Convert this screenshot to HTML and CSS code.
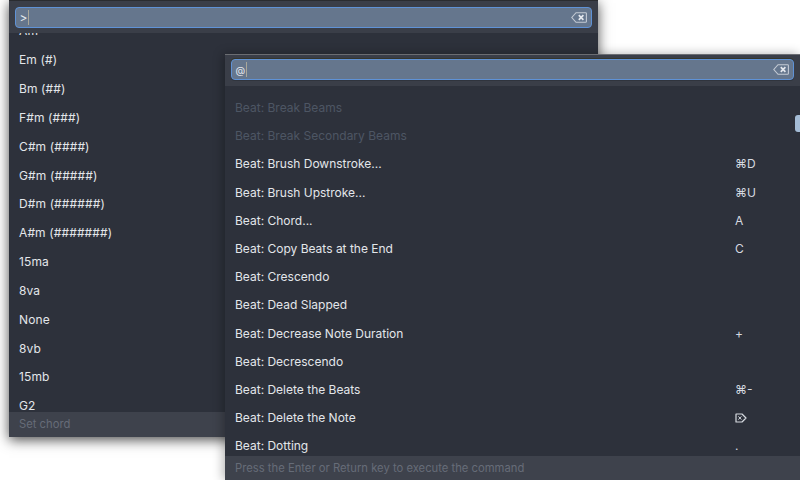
FILE: index.html
```html
<!DOCTYPE html>
<html lang="en">
<head>
<meta charset="utf-8">
<title>Command palettes</title>
<link rel="stylesheet" href="styles.css">
</head>
<body>
<section class="win win-left">
  <header class="head">
    <div class="field"><span class="val">&gt;</span><span class="caret"></span><span class="spring"></span>
      <svg class="clear" viewBox="0 0 16 11"><path d="M5 .7h9.6a.8.8 0 0 1 .8.8v8a.8.8 0 0 1-.8.8H5L.8 5.5z" fill="none" stroke="#c3cad4" stroke-width="1.1"/><path d="M7.8 3.2l4.6 4.6M12.4 3.2L7.8 7.8" stroke="#e4e8ee" stroke-width="1.7"/></svg>
    </div>
  </header>
  <div class="list">
    <div class="row">Am</div>
    <div class="row">Em (#)</div>
    <div class="row">Bm (##)</div>
    <div class="row">F#m (###)</div>
    <div class="row">C#m (####)</div>
    <div class="row">G#m (#####)</div>
    <div class="row">D#m (######)</div>
    <div class="row">A#m (#######)</div>
    <div class="row">15ma</div>
    <div class="row">8va</div>
    <div class="row">None</div>
    <div class="row">8vb</div>
    <div class="row">15mb</div>
    <div class="row">G2</div>
  </div>
  <footer class="foot">Set chord</footer>
</section>
<section class="win win-right">
  <header class="head">
    <div class="field"><span class="val val-at">@</span><span class="caret"></span><span class="spring"></span>
      <svg class="clear" viewBox="0 0 16 11"><path d="M5 .7h9.6a.8.8 0 0 1 .8.8v8a.8.8 0 0 1-.8.8H5L.8 5.5z" fill="none" stroke="#c3cad4" stroke-width="1.1"/><path d="M7.8 3.2l4.6 4.6M12.4 3.2L7.8 7.8" stroke="#e4e8ee" stroke-width="1.7"/></svg>
    </div>
  </header>
  <div class="list cmds">
    <div class="cmd off"><span class="name">Beat: Break Beams</span></div>
    <div class="cmd off"><span class="name">Beat: Break Secondary Beams</span></div>
    <div class="cmd"><span class="name">Beat: Brush Downstroke...</span><span class="key">⌘D</span></div>
    <div class="cmd"><span class="name">Beat: Brush Upstroke...</span><span class="key">⌘U</span></div>
    <div class="cmd"><span class="name">Beat: Chord...</span><span class="key">A</span></div>
    <div class="cmd"><span class="name">Beat: Copy Beats at the End</span><span class="key">C</span></div>
    <div class="cmd"><span class="name">Beat: Crescendo</span></div>
    <div class="cmd"><span class="name">Beat: Dead Slapped</span></div>
    <div class="cmd"><span class="name">Beat: Decrease Note Duration</span><span class="key">+</span></div>
    <div class="cmd"><span class="name">Beat: Decrescendo</span></div>
    <div class="cmd"><span class="name">Beat: Delete the Beats</span><span class="key">⌘-</span></div>
    <div class="cmd"><span class="name">Beat: Delete the Note</span><span class="key"><svg class="del" viewBox="0 0 12 10"><path d="M1 1h6l4 4-4 4H1z" fill="none" stroke="#d6dae0" stroke-width="1.2" stroke-linejoin="round"/><path d="M3.4 3.4l3 3.2M6.4 3.4l-3 3.2" stroke="#d6dae0" stroke-width="1"/></svg></span></div>
    <div class="cmd"><span class="name">Beat: Dotting</span><span class="key">.</span></div>
  </div>
  <div class="thumb"></div>
  <footer class="foot">Press the Enter or Return key to execute the command</footer>
</section>
</body>
</html>
```

FILE: styles.css
```css
* { box-sizing: border-box; }
html, body { margin: 0; height: 100%; }
body {
  position: relative;
  width: 800px;
  height: 480px;
  overflow: hidden;
  background: #fff;
  font-family: Inter, "Liberation Sans", sans-serif;
  font-size: 12px;
  color: #e3e6ea;
}
.win {
  position: absolute;
  display: flex;
  flex-direction: column;
  overflow: hidden;
  background: #2d313b;
}
.win-left {
  left: 9px;
  top: 0;
  width: 589px;
  height: 437px;
  box-shadow: 0 3px 12px rgba(0, 0, 0, .7);
}
.win-right {
  left: 225px;
  top: 54px;
  width: 575px;
  height: 426px;
  border-top: 1px solid #6b6d72;
  box-shadow: -2px 0 10px rgba(0, 0, 0, .3);
}
.head {
  flex: none;
  height: 33px;
  padding: 6px 6px;
  background: #3a3e48;
  border-top: 1px solid #2a2c30;
}
.win-right .head { height: 31px; padding: 3px 6px 5px; border-top: 1px solid #3a3e48; }
.win-right .field { box-shadow: 0 -1px 0 #35362c, 0 1px 0 #30343d; }
.field {
  display: flex;
  align-items: center;
  height: 21px;
  padding: 0 4px 0 3.5px;
  background: #65768d;
  border: 1px solid #5f92d6;
  border-radius: 4px;
  color: #e6e9ee;
  font-size: 12px;
}
.val-at { font-size: 10px; }
.caret { width: 1px; height: 15px; margin-left: .5px; background: #a9a79a; }
.spring { flex: 1; }
.clear { width: 16px; height: 11px; }
.list { flex: 1; min-height: 0; overflow: hidden; }
.row {
  height: 28.85px;
  padding-left: 10px;
  line-height: 28.85px;
  white-space: nowrap;
  letter-spacing: .12px;
}
.row:first-child { margin-top: -15.65px; }
.cmds { padding-top: 7.5px; }
.cmd {
  display: flex;
  height: 28.2px;
  padding-left: 10px;
  align-items: center;
  white-space: nowrap;
}
.cmd.off { color: #4d5664; }
.name { width: 500px; }
.key { color: #d6dae0; display: flex; align-items: center; }
.del { width: 12px; height: 10px; }
.thumb {
  position: absolute;
  right: 0;
  top: 60px;
  width: 5px;
  height: 17px;
  border-radius: 3px 0 0 3px;
  background: #a4bcd6;
}
.foot {
  flex: none;
  height: 25px;
  padding-left: 10px;
  font-size: 11.25px;
  line-height: 25px;
  background: #3e424c;
  color: #666c78;
}
.win-right .foot { height: 24px; line-height: 24px; }
```
